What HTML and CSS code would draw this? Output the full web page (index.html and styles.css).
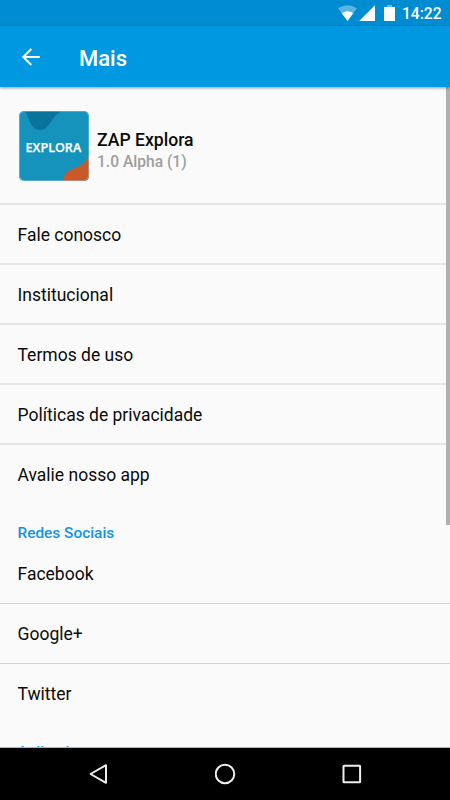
FILE: index.html
```html
<!DOCTYPE html>
<html lang="pt-BR">
<head>
<meta charset="utf-8">
<title>Mais</title>
<link rel="stylesheet" href="styles.css">
</head>
<body>
<div class="screen">
  <div class="status">
    <svg class="status-icons" width="58" height="26" viewBox="0 0 58 26">
      <path d="M0 8.2Q9.5 2.2 19 8.2L9.5 21Z" fill="#fff" fill-opacity=".35"/>
      <path d="M3.8 13.2Q9.5 9.2 15.2 13.2L9.5 21Z" fill="#fff"/>
      <path d="M21.2 21L37 5.2V21Z" fill="#fff"/>
      <path d="M49 5h5v2h-5z" fill="#fff" fill-opacity=".4"/>
      <path d="M46 7h11v14H46z" fill="#fff"/>
    </svg>
    <span class="clock">14:22</span>
  </div>
  <header class="appbar">
    <svg class="back" width="20" height="20" viewBox="0 0 20 20" fill="none" stroke="#fff" stroke-width="2">
      <path d="M18.8 10H3M10.3 2L2.3 10l8 8"/>
    </svg>
    <h1>Mais</h1>
  </header>
  <main class="content">
    <section class="about">
      <svg class="logo" width="70" height="70" viewBox="0 0 70 70">
        <defs><clipPath id="tile"><rect width="70" height="70" rx="5"/></clipPath></defs>
        <g clip-path="url(#tile)">
          <rect width="70" height="70" fill="#1593bd"/>
          <path d="M6 0C10 7 12 19 21 19C31 19 32 5 43 0Z" fill="#08739d"/>
          <path d="M44 70C45 54 63 61 70 45V70Z" fill="#c95a27"/>
        </g>
        <text x="6.6" y="41" textLength="55.6" lengthAdjust="spacingAndGlyphs" class="logo-text">EXPLORA</text>
        <rect x=".5" y=".5" width="69" height="69" rx="5" fill="none" stroke="#a9c9d5" stroke-opacity=".45"/>
      </svg>
      <div class="about-text">
        <div class="name">ZAP Explora</div>
        <div class="version">1.0 Alpha (1)</div>
      </div>
    </section>
    <div class="row">Fale conosco</div>
    <div class="row">Institucional</div>
    <div class="row">Termos de uso</div>
    <div class="row">Políticas de privacidade</div>
    <div class="row last">Avalie nosso app</div>
    <h2>Redes Sociais</h2>
    <div class="row social">Facebook</div>
    <div class="row social">Google+</div>
    <div class="row social last">Twitter</div>
    <h2 class="next">Aplicativo</h2>
    <div class="scrollbar"></div>
  </main>
  <nav class="navbar">
    <svg width="20" height="22" viewBox="0 0 20 22"><path d="M17 2.2V19.8L1.5 11Z"/></svg>
    <svg width="22" height="22" viewBox="0 0 22 22"><circle cx="10" cy="11" r="9.3"/></svg>
    <svg width="20" height="22" viewBox="0 0 20 22"><rect x="1.5" y="2.8" width="16.6" height="16.4" rx=".5"/></svg>
  </nav>
</div>
</body>
</html>
```
FILE: styles.css
```css
* { box-sizing: border-box; }
body { margin: 0; font-family: Roboto, sans-serif; color: #0b0b0b; }
.screen { width: 450px; height: 800px; display: flex; flex-direction: column; overflow: hidden; background: #fafafa; }
.status { height: 26px; flex: none; background: #008cd1; display: flex; align-items: center; justify-content: flex-end; padding-right: 9px; }
.status-icons { margin-right: 6px; }
.clock { color: #fff; font-size: 15.6px; font-weight: 500; line-height: 26px; padding-top: 2px; width: 39px; white-space: nowrap; }
.appbar { height: 61px; flex: none; background: #0099e1; display: flex; align-items: center; padding-left: 21px; z-index: 1; box-shadow: 0 1px 3px rgba(0,0,0,.4); }
.back { flex: none; margin-right: 38px; }
h1 { margin: 0; color: #fff; font-size: 22px; font-weight: 500; line-height: 30px; padding-top: 4px; }
.content { flex: 1; position: relative; overflow: hidden; min-height: 0; border-bottom: 1px solid #b5b5b5; }
.about { height: 118px; display: flex; align-items: center; padding-left: 19px; gap: 8px; border-bottom: 2px solid #e6e6e6; padding-top: 1px; }
.logo { flex: none; }
.logo-text { font: 600 13.2px "Open Sans", sans-serif; fill: #fff; stroke: #fff; stroke-width: .25px; }
.about-text { padding-top: 11px; }
.name { font-size: 17.6px; font-weight: 500; line-height: 22px; }
.version { font-size: 15.6px; font-weight: 500; line-height: 22px; color: #9e9e9e; }
.row { height: 60px; padding: 0 0 0 17.5px; font-size: 17.5px; line-height: 60px; border-bottom: 2px solid #e6e6e6; }
.social { border-bottom: 1px solid #d4d4d4; }
.last { height: 59px; border-bottom: 0; }
h2 { margin: 0; height: 40px; padding-left: 17.5px; font-size: 15.4px; font-weight: 500; line-height: 58px; color: #1295df; }
.next { line-height: 59px; }
.scrollbar { position: absolute; top: 0; right: 0; width: 4px; height: 438px; background: #b0b0b0; }
.navbar { height: 52px; flex: none; background: #000; display: flex; align-items: center; justify-content: space-between; padding: 0 88px 0 89px; }
.navbar svg { fill: none; stroke: #eee; stroke-width: 2; stroke-linejoin: round; }
```
